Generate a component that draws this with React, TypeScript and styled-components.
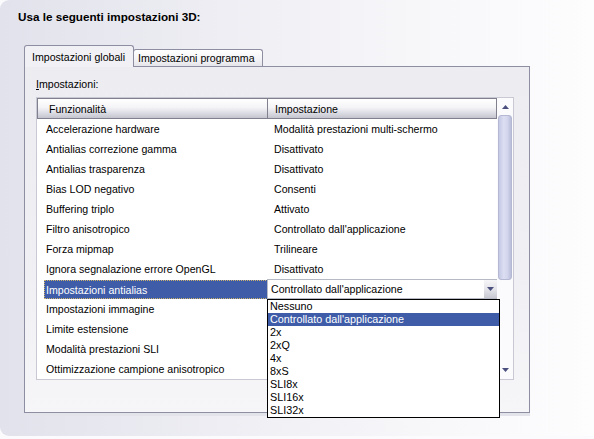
import styled, { createGlobalStyle } from "styled-components";

const GlobalStyle = createGlobalStyle`
  html, body {
    margin: 0;
    padding: 0;
    background: #fbfbfd;
  }
  body {
    font-family: "Liberation Sans", Arial, sans-serif;
  }
`;

const Frame = styled.div`
  box-sizing: border-box;
  width: 594px;
  height: 436px;
  padding-top: 10px;
  border-radius: 9px 0 0 9px;
  background: linear-gradient(to right, #e2e2ec 0%, #ededf3 35%, #f7f7fa 70%, #fdfdfe 100%);
  overflow: visible;
`;

const Title = styled.h1`
  margin: 0 0 0 18px;
  font-size: 11.7px;
  line-height: 14px;
  font-weight: bold;
  color: #000;
`;

const TabStrip = styled.div`
  display: flex;
  align-items: flex-end;
  height: 21px;
  margin: 21px 0 0 24px;
  position: relative;
  z-index: 1;
`;

const Tab = styled.div<{ $active?: boolean }>`
  box-sizing: border-box;
  display: flex;
  align-items: center;
  font-size: 10.6px;
  color: #000;
  border: 1px solid #8e8ea2;
  border-bottom: none;
  border-radius: 3px 3px 0 0;
  width: ${(p) => (p.$active ? "110px" : "130px")};
  height: ${(p) => (p.$active ? "22px" : "17px")};
  padding-left: ${(p) => (p.$active ? "7px" : "4px")};
  margin-bottom: ${(p) => (p.$active ? "-1px" : "0")};
  margin-left: ${(p) => (p.$active ? "0" : "-1px")};
  background: ${(p) =>
    p.$active ? "#f1f1f5" : "linear-gradient(#ffffff, #f3f3f6 60%, #e4e4ea)"};
`;

const Panel = styled.div`
  box-sizing: border-box;
  width: 506px;
  height: 347px;
  margin-left: 24px;
  padding: 10px 0 0 11px;
  border: 1px solid #8e8ea2;
  background: linear-gradient(#ececf1, #f0f0f4 60%, #f6f6f9);
  box-shadow: 0 3px 0 #e3e3ec;
`;

const Label = styled.div`
  font-size: 10.6px;
  line-height: 14px;
  color: #000;
  margin-bottom: 6px;
  span {
    text-decoration: underline;
  }
`;

const List = styled.div`
  box-sizing: border-box;
  width: 478px;
  height: 283px;
  display: flex;
  border: 1px solid #c9c9d3;
  background: #ffffff;
`;

const Table = styled.div`
  width: 460px;
  display: flex;
  flex-direction: column;
`;

const Header = styled.div`
  display: grid;
  grid-template-columns: 231px 229px;
  height: 21px;
`;

const HeaderCell = styled.div<{ $pad: number }>`
  box-sizing: border-box;
  display: flex;
  align-items: center;
  padding-left: ${(p) => p.$pad}px;
  font-size: 10.6px;
  color: #000;
  border: 1px solid #80808f;
  margin-left: -1px;
  &:first-child {
    margin-left: 0;
  }
  background: linear-gradient(#ffffff 0%, #f4f4f7 45%, #d6d6df 80%, #c4c4cf 100%);
`;

const Row = styled.div`
  display: grid;
  grid-template-columns: 231px 229px;
  height: 20px;
`;

const Cell = styled.div<{ $pad: number }>`
  display: flex;
  align-items: center;
  padding-left: ${(p) => p.$pad}px;
  font-size: 10.6px;
  color: #000;
  white-space: nowrap;
  position: relative;
`;

const SelectedText = styled.div`
  flex: 1;
  align-self: stretch;
  margin: 1px 0 0 -2px;
  padding-left: 2px;
  display: flex;
  align-items: center;
  background: #3e5ca8;
  color: #ffffff;
  outline: 1px dotted #cdb36a;
  outline-offset: -1px;
`;

const Combo = styled.div`
  box-sizing: border-box;
  position: relative;
  flex: 1;
  align-self: stretch;
  margin-left: -7px;
  display: flex;
  align-items: center;
  padding-left: 3px;
  border: 1px solid #b6bac4;
  border-right: none;
  background: #ffffff;
  font-size: 10.6px;
  color: #000;
`;

const ComboText = styled.div`
  flex: 1;
`;

const ComboButton = styled.div`
  width: 13px;
  align-self: stretch;
  display: flex;
  align-items: center;
  justify-content: center;
  background: linear-gradient(#f6f6f8, #e4e4ea 50%, #c9c9d3);
`;

const Dropdown = styled.ul`
  position: absolute;
  top: 100%;
  left: -1px;
  width: 233px;
  box-sizing: border-box;
  margin: 1px 0 0 0;
  padding: 0;
  list-style: none;
  border: 1px solid #000;
  background: #ffffff;
  z-index: 5;
`;

const Option = styled.li<{ $selected?: boolean }>`
  height: 13px;
  line-height: 13px;
  padding-left: 2px;
  font-size: 10.8px;
  color: ${(p) => (p.$selected ? "#ffffff" : "#000")};
  background: ${(p) => (p.$selected ? "#3e5ca8" : "transparent")};
`;

const ScrollBar = styled.div`
  width: 16px;
  display: flex;
  flex-direction: column;
  background: #fbfbfd;
`;

const ArrowBox = styled.div<{ $h: number }>`
  height: ${(p) => p.$h}px;
  display: flex;
  align-items: center;
  justify-content: center;
`;

const Thumb = styled.div`
  box-sizing: border-box;
  height: 165px;
  margin: 0 1px 0 1px;
  border: 1px solid #b4b8d2;
  border-radius: 3px;
  background: linear-gradient(to right, #c4c8e4, #dcdff2 40%, #d2d5ec 70%, #babed9);
`;

const Track = styled.div`
  flex: 1;
`;

const Arrow = ({ down }: { down?: boolean }) => (
  <svg width="7" height="4" viewBox="0 0 7 4">
    <polygon
      points={down ? "0,0 7,0 3.5,4" : "3.5,0 7,4 0,4"}
      fill="#4b4f7e"
    />
  </svg>
);

// rows below the open combo have their values hidden by the dropdown
const rows: [string, string][] = [
  ["Accelerazione hardware", "Modalità prestazioni multi-schermo"],
  ["Antialias correzione gamma", "Disattivato"],
  ["Antialias trasparenza", "Disattivato"],
  ["Bias LOD negativo", "Consenti"],
  ["Buffering triplo", "Attivato"],
  ["Filtro anisotropico", "Controllato dall'applicazione"],
  ["Forza mipmap", "Trilineare"],
  ["Ignora segnalazione errore OpenGL", "Disattivato"],
  ["Impostazioni antialias", "Controllato dall'applicazione"],
  ["Impostazioni immagine", ""],
  ["Limite estensione", ""],
  ["Modalità prestazioni SLI", ""],
  ["Ottimizzazione campione anisotropico", ""],
];

const options = [
  "Nessuno",
  "Controllato dall'applicazione",
  "2x",
  "2xQ",
  "4x",
  "8xS",
  "SLI8x",
  "SLI16x",
  "SLI32x",
];

const SELECTED = 8;

export default function App() {
  return (
    <>
      <GlobalStyle />
      <Frame>
        <Title>Usa le seguenti impostazioni 3D:</Title>
        <TabStrip>
          <Tab $active>Impostazioni globali</Tab>
          <Tab>Impostazioni programma</Tab>
        </TabStrip>
        <Panel>
          <Label>
            <span>I</span>mpostazioni:
          </Label>
          <List>
            <Table>
              <Header>
                <HeaderCell $pad={11}>Funzionalità</HeaderCell>
                <HeaderCell $pad={7}>Impostazione</HeaderCell>
              </Header>
              {rows.map(([name, value], i) =>
                i === SELECTED ? (
                  <Row key={name}>
                    <Cell $pad={9}>
                      <SelectedText>{name}</SelectedText>
                    </Cell>
                    <Cell $pad={6}>
                      <Combo>
                        <ComboText>{value}</ComboText>
                        <ComboButton>
                          <Arrow down />
                        </ComboButton>
                        <Dropdown>
                          {options.map((o) => (
                            <Option key={o} $selected={o === value}>
                              {o}
                            </Option>
                          ))}
                        </Dropdown>
                      </Combo>
                    </Cell>
                  </Row>
                ) : (
                  <Row key={name}>
                    <Cell $pad={9}>{name}</Cell>
                    <Cell $pad={6}>{value}</Cell>
                  </Row>
                )
              )}
            </Table>
            <ScrollBar>
              <ArrowBox $h={17}>
                <Arrow />
              </ArrowBox>
              <Thumb />
              <Track />
              <ArrowBox $h={18}>
                <Arrow down />
              </ArrowBox>
            </ScrollBar>
          </List>
        </Panel>
      </Frame>
    </>
  );
}
